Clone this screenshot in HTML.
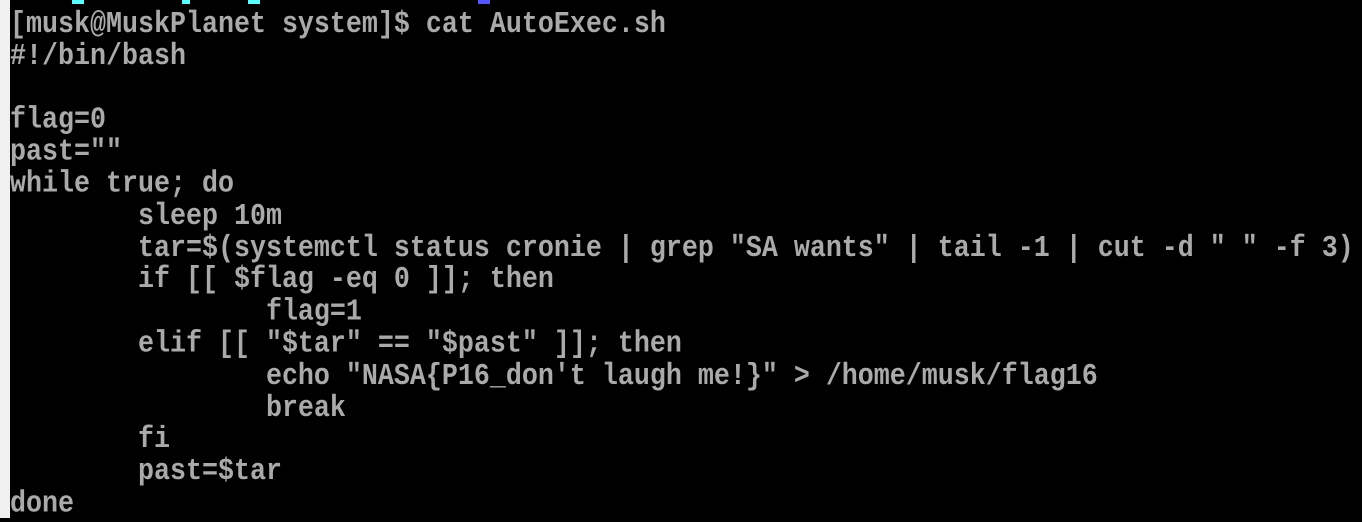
<!DOCTYPE html>
<html><head><style>
html,body{margin:0;padding:0;width:1362px;height:518px;overflow:hidden;background:#000;}
#strip{position:absolute;left:0;top:0;width:10px;height:518px;background:#f0f0f0;}
pre{position:absolute;left:10px;top:10px;margin:0;font-family:"Liberation Mono",monospace;font-size:26.67px;line-height:32px;color:#aaa;font-weight:bold;letter-spacing:0;transform:scaleY(1.15);transform-origin:0 0;}
pre div{height:27.8px;line-height:27.8px;}
.c{position:absolute;top:0;height:4px;}
</style></head><body>
<div id="strip"></div>
<div class="c" style="left:72px;width:12px;background:#5ff;"></div>
<div class="c" style="left:182px;width:8px;background:#5ff;"></div>
<div class="c" style="left:248px;width:12px;background:#5ff;"></div>
<div class="c" style="left:478px;width:12px;background:#55f;"></div>
<pre><div>[musk@MuskPlanet system]$ cat AutoExec.sh</div><div>#!/bin/bash</div><div> </div><div>flag=0</div><div>past=""</div><div>while true; do</div><div>        sleep 10m</div><div>        tar=$(systemctl status cronie | grep "SA wants" | tail -1 | cut -d " " -f 3)</div><div>        if [[ $flag -eq 0 ]]; then</div><div>                flag=1</div><div>        elif [[ "$tar" == "$past" ]]; then</div><div>                echo "NASA{P16_don't laugh me!}" &gt; /home/musk/flag16</div><div>                break</div><div>        fi</div><div>        past=$tar</div><div>done</div></pre>
</body></html>
